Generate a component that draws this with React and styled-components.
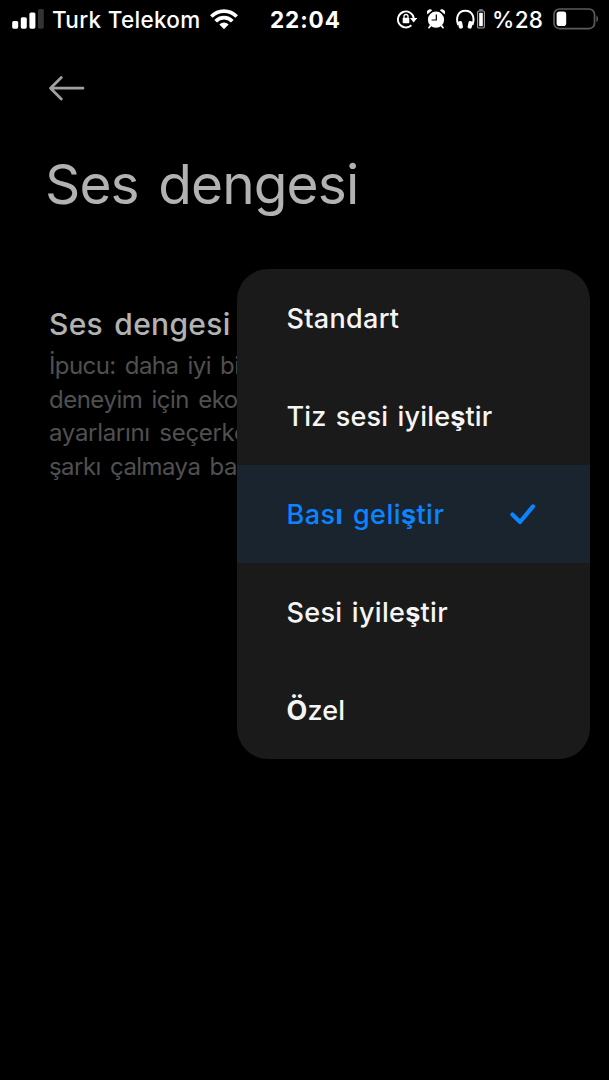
import React, {useState} from "react";
import styled, {createGlobalStyle} from "styled-components";

// "heavy" marks the letters that are drawn bolder than the rest of the label
const presets = [
    {id: "standard", spacing: 0.3, parts: [{text: "Standart"}]},
    {id: "treble", spacing: 0.16, parts: [{text: "Tiz sesi iyile"}, {text: "ş", heavy: true}, {text: "tir"}]},
    {id: "bass", spacing: 0.45, parts: [{text: "Bas"}, {text: "ı", heavy: true}, {text: " geli"}, {text: "ş", heavy: true}, {text: "tir"}]},
    {id: "voice", spacing: 0.3, parts: [{text: "Sesi iyile"}, {text: "ş", heavy: true}, {text: "tir"}]},
    {id: "custom", spacing: 0.15, parts: [{text: "Ö", heavy: true}, {text: "zel"}]},
];

const hintLines = [
    {text: "İpucu: daha iyi bir", spacing: -0.58},
    {text: "deneyim için ekolayzer", spacing: -0.5},
    {text: "ayarlarını seçerken", spacing: -0.3},
    {text: "şarkı çalmaya başlayın", spacing: -0.55},
];

function SignalIcon() {
    return (
        <svg width="32" height="20" viewBox="0 0 32 20" fill="#fff">
            <rect x="0.2" y="12" width="6" height="7.7" rx="1.6"/>
            <rect x="8.8" y="8.2" width="6" height="11.5" rx="1.6"/>
            <rect x="17.4" y="3.4" width="6" height="16.3" rx="1.6"/>
            <rect x="26" y="0" width="5.8" height="19.7" rx="1.6" fill="#333"/>
        </svg>
    )
}

function WifiIcon() {
    return (
        <svg width="28" height="20" viewBox="0 0 28 20" fill="none" stroke="#fff" strokeWidth="3.7">
            <path d="M1.3 7.5C8.2 0.2 19.8 0.2 26.7 7.5"/>
            <path d="M5.7 12.3C10.3 7.4 17.7 7.4 22.3 12.3"/>
            <path d="M9.4 15.6C11.9 12.8 16.1 12.8 18.6 15.6L14 20.2Z" fill="#fff" stroke="none"/>
        </svg>
    )
}

function RotationLockIcon() {
    return (
        <svg width="20" height="20" viewBox="0 0 20 20" fill="none" stroke="#fff">
            <path d="M14.4 16.3A8 8 0 1 1 16.8 9" strokeWidth="1.9"/>
            <path d="M13 9H20.2L16.7 13.4Z" fill="#fff" stroke="none"/>
            <rect x="5.7" y="8.8" width="6.6" height="5.4" rx="0.8" fill="#fff" stroke="none"/>
            <path d="M7 9V7.5a2 2 0 0 1 4 0V9" strokeWidth="1.3"/>
        </svg>
    )
}

function AlarmIcon() {
    return (
        <svg width="18" height="20" viewBox="0 0 18 20" fill="#fff">
            <circle cx="9" cy="10.7" r="8.1"/>
            <path d="M0.5 5.2A3.1 3.1 0 0 1 5.2 1.2ZM17.5 5.2A3.1 3.1 0 0 0 12.8 1.2Z"/>
            <path d="M3.8 16.4L1.9 18.7M14.2 16.4L16.1 18.7" stroke="#fff" strokeWidth="1.7" strokeLinecap="round"/>
            <path d="M9.3 5.6V11H4.6" fill="none" stroke="#000" strokeWidth="1.2"/>
        </svg>
    )
}

function HeadphonesIcon() {
    return (
        <svg width="19" height="20" viewBox="0 0 19 20" fill="none" stroke="#fff">
            <path d="M2.3 16C-0.5 9.5 1.7 1.8 9.3 1.8S19.1 9.5 16.3 16" strokeWidth="2"/>
            <rect x="2.3" y="12" width="4.2" height="7.6" rx="1.7" transform="rotate(-12 4.5 15.5)" fill="#fff" stroke="none"/>
            <rect x="12.1" y="12" width="4.2" height="7.6" rx="1.7" transform="rotate(12 14.1 15.5)" fill="#fff" stroke="none"/>
        </svg>
    )
}

function HeadsetBatteryIcon() {
    return (
        <svg width="8" height="20" viewBox="0 0 8 20">
            <rect x="0.6" y="2" width="6.8" height="17" rx="1.3" fill="none" stroke="#a0a0a0" strokeWidth="1.1"/>
            <rect x="2.2" y="3.8" width="3.6" height="13.4" fill="#fff"/>
            <rect x="2.2" y="0.3" width="3.6" height="1.2" fill="#a0a0a0"/>
        </svg>
    )
}

function BatteryIcon() {
    return (
        <svg width="46" height="22" viewBox="0 0 46 22">
            <rect x="1" y="1" width="40.5" height="19.6" rx="5.4" fill="none" stroke="#5c5c5c" strokeWidth="1.7"/>
            <rect x="3.6" y="3.6" width="9.6" height="14.4" rx="2.8" fill="#fff"/>
            <path d="M43.4 7.4C45.6 8.4 45.6 13.2 43.4 14.2Z" fill="#5c5c5c"/>
        </svg>
    )
}

function App() {
    const [selected, setSelected] = useState("bass");

    return (
        <Screen>
            <GlobalStyle/>
            <StatusBar>
                <StatusItem $width="40px"><SignalIcon/></StatusItem>
                <Carrier>Turk Telekom</Carrier>
                <StatusItem $width="60px"><WifiIcon/></StatusItem>
                <Clock>22:04</Clock>
                <StatusItem $width="30px"><RotationLockIcon/></StatusItem>
                <StatusItem $width="29px"><AlarmIcon/></StatusItem>
                <StatusItem $width="21px"><HeadphonesIcon/></StatusItem>
                <StatusItem $width="15px"><HeadsetBatteryIcon/></StatusItem>
                <Percent>%28</Percent>
                <StatusItem $width="46px"><BatteryIcon/></StatusItem>
            </StatusBar>
            <BackButton aria-label="Geri">
                <svg width="38" height="26" viewBox="0 0 38 26" fill="none" stroke="#a0a0a0" strokeWidth="2.8" strokeLinecap="round" strokeLinejoin="round">
                    <path d="M35 13.2H2.5M13.3 2.6L2.5 13.2L13.3 24"/>
                </svg>
            </BackButton>
            <Title>Ses dengesi</Title>
            <Setting>
                <SettingName>Ses dengesi</SettingName>
                <Hint>
                    {hintLines.map((line) => (
                        <HintLine key={line.text} $spacing={line.spacing}>{line.text}</HintLine>
                    ))}
                </Hint>
            </Setting>
            <Menu>
                {presets.map((preset) => (
                    <MenuItem
                        key={preset.id}
                        $active={preset.id === selected}
                        onClick={() => setSelected(preset.id)}
                    >
                        <Label $spacing={preset.spacing}>
                            {preset.parts.map((part, i) => (
                                part.heavy ? <Heavy key={i}>{part.text}</Heavy> : part.text
                            ))}
                        </Label>
                        {preset.id === selected &&
                            <svg width="28" height="24" viewBox="0 0 28 24" fill="none" stroke="#0d84ff" strokeWidth="4.2" strokeLinecap="round" strokeLinejoin="round">
                                <path d="M3.4 12.6L11 20L24 4.4"/>
                            </svg>
                        }
                    </MenuItem>
                ))}
            </Menu>
        </Screen>
    )
}

export default App;

const GlobalStyle = createGlobalStyle`
    body {
        margin: 0;
        background-color: #000;
    }

    svg {
        display: block;
        flex: none;
    }
`

const Screen = styled.div`
    position: relative;
    height: 1080px;
    overflow: hidden;
    background-color: #000;
    color: #fff;
    font-family: Inter, "Liberation Sans", sans-serif;
`

const StatusBar = styled.div`
    display: flex;
    align-items: center;
    height: 38px;
    padding-left: 12px;
    font-size: 22.5px;
    line-height: 39px;
    white-space: nowrap;
`

const StatusItem = styled.div`
    flex: none;
    width: ${props => props.$width};
`

const Carrier = styled.div`
    flex: none;
    width: 158px;
    font-weight: 500;
    letter-spacing: 0.3px;
`

const Clock = styled.div`
    flex: none;
    width: 127px;
    font-weight: 700;
    letter-spacing: 0.9px;
`

const Percent = styled.div`
    flex: none;
    width: 61px;
    font-weight: 500;
    letter-spacing: 0.3px;
`

const BackButton = styled.button`
    display: block;
    margin: 37px 0 0 48px;
    padding: 0;
    border: 0;
    background: transparent;
    cursor: pointer;
`

const Title = styled.h1`
    margin: 48px 0 0 45px;
    color: #b2b2b2;
    font-size: 55px;
    font-weight: 400;
    line-height: 70px;
    letter-spacing: -0.9px;
    word-spacing: 5px;
    white-space: nowrap;
`

const Setting = styled.div`
    width: 240px;
    margin: 85px 0 0 49px;
    white-space: nowrap;
`

const SettingName = styled.div`
    color: #b2b2b2;
    font-size: 30px;
    font-weight: 500;
    line-height: 40px;
    letter-spacing: 0.3px;
    word-spacing: 3px;
`

const Hint = styled.div`
    margin-top: 5px;
    color: #505050;
    font-size: 24px;
    line-height: 33.5px;
    word-spacing: 3px;
`

const HintLine = styled.div`
    height: 33.5px;
    letter-spacing: ${props => props.$spacing}px;
`

const Menu = styled.div`
    position: absolute;
    top: 269px;
    left: 237px;
    width: 353px;
    border-radius: 31px;
    background-color: #1a1a1a;
    overflow: hidden;
`

const MenuItem = styled.div`
    display: flex;
    align-items: center;
    justify-content: space-between;
    box-sizing: border-box;
    height: 98px;
    padding: 0 53px 0 49.5px;
    color: ${props => props.$active ? "#0d84ff" : "#f5f5f5"};
    background-color: ${props => props.$active ? "#19242f" : "transparent"};
    cursor: pointer;
`

const Label = styled.div`
    padding-top: 2px;
    font-size: 27px;
    font-weight: 500;
    line-height: 40px;
    letter-spacing: ${props => props.$spacing}px;
    word-spacing: 2px;
    white-space: pre;
`

const Heavy = styled.span`
    font-weight: 700;
`
